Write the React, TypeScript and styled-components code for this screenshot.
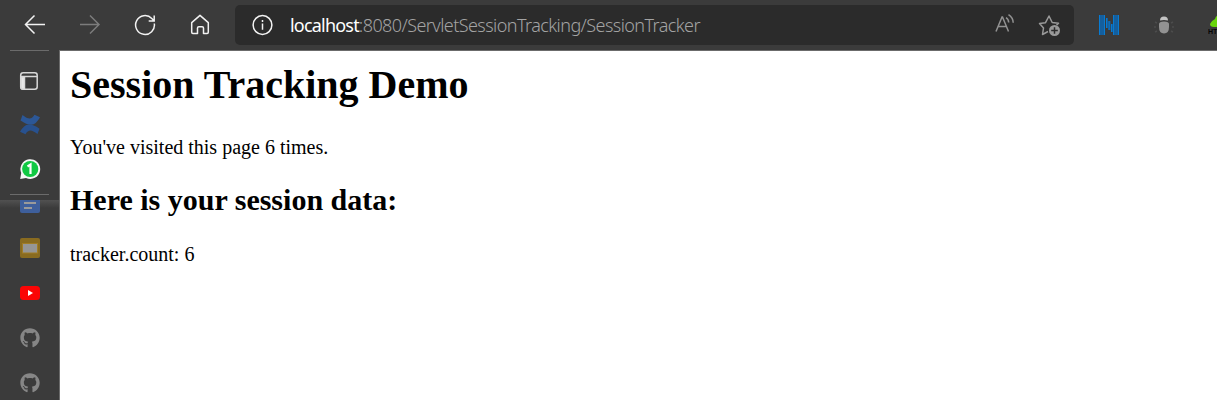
import React from 'react';
import styled, { createGlobalStyle } from 'styled-components';
import { FaGithub } from 'react-icons/fa';

const GlobalStyle = createGlobalStyle`
  * { box-sizing: border-box; }
  body { margin: 0; background: #fff; overflow: hidden; }
`;

const Browser = styled.div`
  display: flex;
  flex-direction: column;
  height: 400px;
  background: #3b3b3b;
  overflow: hidden;
`;

const Toolbar = styled.header`
  display: flex;
  align-items: center;
  flex: none;
  height: 50px;
  padding-left: 24px;
  overflow: hidden;
`;

const NavButtons = styled.nav`
  display: flex;
  gap: 33px;
  width: 211px;
  flex: none;
`;

const Icon = styled.svg<{ $color?: string }>`
  display: block;
  flex: none;
  fill: none;
  stroke: ${(p) => p.$color ?? '#f2f2f2'};
  stroke-width: 1.5;
`;

const GithubIcon = styled(FaGithub)`
  flex: none;
  color: #868686;
`;

const AddressBar = styled.div`
  display: flex;
  align-items: center;
  flex: none;
  width: 839px;
  height: 40px;
  padding: 0 12px 0 17px;
  border-radius: 5px;
  background: #2b2b2b;
`;

const Url = styled.div`
  flex: 1;
  margin-left: 16px;
  font: 18px/26px 'Noto Sans', sans-serif;
  font-weight: 300;
  letter-spacing: -0.57px;
  color: #a3a3a3;
  white-space: nowrap;
`;

const Host = styled.span`
  font-weight: 400;
  letter-spacing: -0.8px;
  color: #fff;
`;

const AddressActions = styled.div`
  display: flex;
  gap: 22px;
`;

const Extensions = styled.div`
  display: flex;
  align-items: center;
  flex: none;
  gap: 33px;
  margin-left: 24px;
`;

const Body = styled.div`
  display: flex;
  flex: 1;
`;

const Sidebar = styled.aside`
  display: flex;
  flex-direction: column;
  align-items: center;
  width: 59px;
  flex: none;
`;

const Divider = styled.div`
  width: 39px;
  height: 1px;
  flex: none;
  background: #6b6b6b;
`;

const PinnedTabs = styled.div`
  display: flex;
  flex-direction: column;
  align-items: center;
  gap: 22px;
  height: 143px;
  padding-top: 19px;
`;

const TabList = styled.div`
  display: flex;
  flex-direction: column;
  align-items: center;
  gap: 25px;
  width: 100%;
  height: 200px;
  margin-top: 5px;
  padding-left: 1px;
  overflow: hidden;
  background: linear-gradient(#515151, #3b3b3b 8px);
`;

const ClippedTab = styled.div`
  display: flex;
  align-items: flex-end;
  height: 13px;
  overflow: hidden;
`;

const Page = styled.main`
  flex: 1;
  padding: 0 10px;
  border: solid #6b6b6b;
  border-width: 1px 0 0 1px;
  background: #fff;
  color: #000;
  font: 20px/23px 'Liberation Serif', 'Times New Roman', serif;
`;

const Title = styled.h1`
  margin: 10px 0 28px;
  font-size: 40px;
  line-height: 47px;
`;

const Subtitle = styled.h2`
  margin: 23px 0 26px;
  font-size: 30px;
  line-height: 35px;
`;

const Text = styled.p`
  margin: 0;
`;

const App = () => (
  <Browser>
    <GlobalStyle />
    <Toolbar>
      <NavButtons>
        <Icon width="22" height="22" viewBox="0 0 22 22">
          <path d="M21 10.500H2M10.500 1.500l-9 9 9 9" />
        </Icon>
        <Icon width="22" height="22" viewBox="0 0 22 22" $color="#7c7c7c">
          <path d="M1 10.500h19M11 1.500l9 9-9 9" />
        </Icon>
        <Icon width="22" height="22" viewBox="0 0 22 22">
          <path d="M20.3 9.5A9.4 9.4 0 1 1 17.8 4.5L20 6.7M20.2 1.5v5.4h-5.5" />
        </Icon>
        <Icon width="22" height="22" viewBox="0 0 22 22">
          <path d="M2.7 8.600L11 1.400l8.3 7.2v9.700q0 1.200-1.200 1.200h-3.600v-5.400q0-1.400-1.400-1.400H9.900q-1.400 0-1.400 1.400v5.400H3.900q-1.200 0-1.200-1.200z" strokeLinejoin="round" />
        </Icon>
      </NavButtons>
      <AddressBar>
        <Icon width="22" height="22" viewBox="0 0 22 22">
          <circle cx="10.500" cy="11" r="9.4" />
          <path d="M10.500 9.500v6.300M10.500 6v2" />
        </Icon>
        <Url>
          <Host>localhost</Host>:8080/ServletSessionTracking/SessionTracker
        </Url>
        <AddressActions>
          <Icon width="22" height="22" viewBox="0 0 22 22" $color="#929292">
            <path d="M2 18.500L8 4h.5l6 14.500M4.200 13.500h8M12 4.600q2.600 1.500 2.700 5M14.500 1.700q4.600 3 4.700 8" />
          </Icon>
          <Icon width="24" height="24" viewBox="0 0 24 24" $color="#999">
            <path d="M10 18.500l-5.500 3 1-6.500L1.500 10.500l6-.8L11 3l3.200 6.500 6.300.8-2 2" strokeLinejoin="round" />
            <circle cx="16.500" cy="17.500" r="5.500" fill="#999" stroke="none" />
            <path d="M16.500 14.200v6.600M13.200 17.500h6.600" stroke="#2b2b2b" />
          </Icon>
        </AddressActions>
      </AddressBar>
      <Extensions>
        <Icon width="22" height="22" viewBox="0 0 22 22" $color="#087bd2">
          <path d="M1 1h6v20H1zM15 1h6v20h-6zM8 4h2v10H8zM10.500 7h2v9h-2zM13 10h2v8h-2z" fill="#145f9e" stroke="none" />
          <path d="M1.500 1v20M6.500 1v20M8.500 4v10M11 7v9M13.500 10v8M15.500 1v20M20.500 1v20" strokeWidth="1" />
        </Icon>
        <Icon width="22" height="22" viewBox="0 0 22 22" $color="none">
          <path d="M4 9l-2-1M18 9l2-1M3 13H1M19 13h2M4 17l-2 1M18 17l2 1" stroke="#4c4c4c" />
          <path d="M7 6.500q0-4 4-4t4 4q-4-1-8 0z" fill="#c2c2c2" />
          <path d="M6 10q0-2.500 5-2.500t5 2.500v3q0 6.500-5 6.500T6 13z" fill="#929292" />
        </Icon>
        <Icon width="22" height="22" viewBox="0 0 22 22" $color="none">
          <path d="M2 10q1-3 5-5 1-4 5-4h8v12H6q-4 0-4-3z" fill="#69d50c" />
          <text x="0" y="20" fill="#050505" fontFamily="Liberation Sans" fontWeight="bold" fontSize="7">HTML</text>
        </Icon>
      </Extensions>
    </Toolbar>
    <Body>
      <Sidebar>
        <Divider />
        <PinnedTabs>
          <Icon width="22" height="22" viewBox="0 0 22 22" $color="#d8d8d8">
            <rect x="1.700" y="2.700" width="16.500" height="16.500" rx="2.500" />
            <path d="M2 6.500h16" />
            <path d="M2 7h3.500v12H3q-1 0-1-2z" fill="#e8e8e8" />
          </Icon>
          <Icon width="22" height="22" viewBox="0 0 22 22" $color="none">
            <path d="M3.500 1q4.500 3.500 7 3.500 3 0 5-3.700L21 3.200Q17 10.500 12.500 10.700 8 11 1.500 6.500z" fill="#2c5796" />
            <path d="M18.500 20q-4.500-3.500-7-3.500-3 0-5 3.700L1 17.800Q5 10.800 9.500 10.500q4.500-.3 11 4.200z" fill="#28518e" />
          </Icon>
          <Icon width="22" height="22" viewBox="0 0 22 22" $color="none">
            <path d="M1.200 21l1-6A9.900 9.900 0 1 1 7 20z" fill="#f6f6f6" />
            <circle cx="11.200" cy="11" r="8.100" fill="#11c843" />
            <path d="M8.500 8.500l3-2V16" stroke="#fff" strokeWidth="2.200" />
          </Icon>
        </PinnedTabs>
        <Divider />
        <TabList>
          <ClippedTab>
            <Icon width="20" height="20" viewBox="0 0 20 20" $color="none">
              <rect width="20" height="20" rx="2" fill="#3e5f9c" />
              <path d="M4 10h12M4 15h8" stroke="#9a9a9a" strokeWidth="2.200" />
            </Icon>
          </ClippedTab>
          <Icon width="20" height="20" viewBox="0 0 20 20" $color="none">
            <rect width="20" height="20" rx="2" fill="#896b20" />
            <rect x="2.500" y="5.500" width="15" height="9.500" fill="#969696" stroke="#a17d26" strokeWidth="1" />
          </Icon>
          <Icon width="20" height="20" viewBox="0 0 20 20" $color="none">
            <rect y="3" width="20" height="14" rx="3.500" fill="#fb0505" />
            <path d="M8 7l5 3-5 3z" fill="#fff" />
          </Icon>
          <GithubIcon size={20} />
          <GithubIcon size={20} />
        </TabList>
      </Sidebar>
      <Page>
        <Title>Session Tracking Demo</Title>
        <Text>You've visited this page 6 times.</Text>
        <Subtitle>Here is your session data:</Subtitle>
        <Text>tracker.count: 6</Text>
      </Page>
    </Body>
  </Browser>
);

export default App;
